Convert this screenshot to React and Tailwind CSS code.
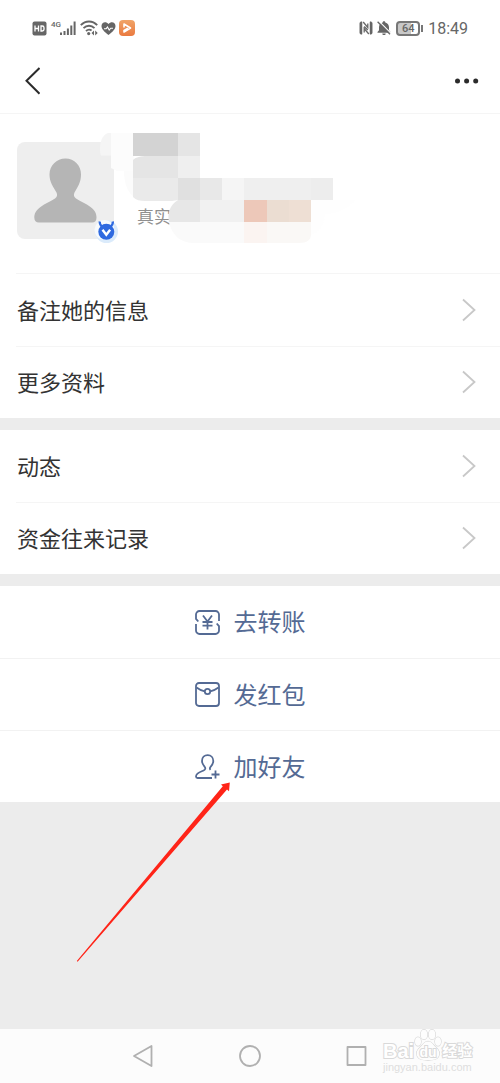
import React from 'react';

const INFO_ROWS = [
  ['备注她的信息', '更多资料'],
  ['动态', '资金往来记录'],
];

// Pixelated patches over the private name: [x, y, width, height, color]
const MOSAIC = [
  [133, 133, 45, 23, '#d3d3d3'],
  [178, 133, 22, 23, '#e5e5e5'],
  [178, 156, 22, 22, '#efefef'],
  [178, 178, 22, 22, '#e0e0e0'],
  [200, 178, 22, 22, '#e8e8e8'],
  [222, 178, 22, 22, '#f5f5f5'],
  [244, 178, 67, 22, '#efefef'],
  [311, 178, 22, 22, '#ededed'],
  [200, 200, 44, 22, '#f1f1f1'],
  [244, 200, 23, 22, '#edc8b9'],
  [267, 200, 22, 22, '#ebddd2'],
  [289, 200, 22, 22, '#eedfd4'],
];

function StatusBar() {
  return (
    <div className="flex h-12 items-center justify-between px-8 pt-2 text-[#666]">
      <div className="flex items-center">
        <svg className="h-[15px] w-[15px]" viewBox="0 0 15 15" fill="none">
          <rect x="0.5" y="0.5" width="14" height="14" rx="2" fill="#666" />
          <path d="M3 4.5v6M6.5 4.5v6M3 7.5h3.5M9 5v5h1.2a1.8 1.8 0 0 0 1.8-1.8V6.8A1.8 1.8 0 0 0 10.2 5z" stroke="#fff" strokeWidth="1.3" />
        </svg>
        <span className="ml-1 h-4 font-[Roboto] text-[8px] leading-[9px] font-medium">4G</span>
        <svg className="-ml-px h-4 w-4" viewBox="0 0 16 16" stroke="currentColor" strokeWidth="2">
          <path d="M1 12.5v2.5M4.5 11v4M7.9 8.5v6.5M11.3 5.5v9.5M14.6 1.5v13.5" />
        </svg>
        <svg className="ml-1 h-4 w-[18px]" viewBox="0 0 18 16" fill="none" stroke="currentColor" strokeWidth="1.900">
          <path d="M0.8 5.2C5.5 0.3 12.500 0.3 17.200 5.2M3.500 8.200c3.200-3.200 7.800-3.200 11 0M6 11c2-1.800 3.800-1.800 5.600-0.400" />
          <circle cx="8.700" cy="13.600" r="1.600" fill="currentColor" stroke="none" />
          <path d="M14 10.500v5l-2.500-2.500zM15.200 10.500v5l2.500-2.500z" fill="currentColor" stroke="none" />
        </svg>
        <svg className="ml-[3px] h-[15px] w-[15px]" viewBox="0 0 15 14" fill="none">
          <path d="M7.500 13.500C3 10 0.500 7.500 0.500 4.500 0.500 0.500 5 -0.500 7.500 2.500 10 -0.500 14.500 0.500 14.500 4.500c0 3-2.500 5.500-7 9z" fill="#666" />
          <path d="M3 7.200h2.200l1.300-1.700 1.700 3L9.700 6.700H12" stroke="#fff" strokeWidth="1.100" />
        </svg>
        <svg className="ml-[3px] h-4 w-4" viewBox="0 0 16 16" fill="none">
          <defs>
            <linearGradient id="playerTile" x1="0" y1="0" x2="0" y2="1">
              <stop offset="0" stopColor="#f0a468" />
              <stop offset="1" stopColor="#ea7a40" />
            </linearGradient>
          </defs>
          <rect width="16" height="16" rx="4" fill="url(#playerTile)" />
          <path d="M5 7V4L11.500 8 5 12v-1.500L8.500 8.500" stroke="#fff" strokeWidth="1.600" strokeLinejoin="round" strokeLinecap="round" />
        </svg>
      </div>

      <div className="flex items-center">
        <svg className="h-[14px] w-[14px]" viewBox="0 0 14 14" fill="none" stroke="currentColor">
          <path d="M3 0.800H2.300A1.500 1.500 0 0 0 0.800 2.300v9.400a1.500 1.500 0 0 0 1.500 1.500H3z" fill="currentColor" strokeWidth="0.500" />
          <path d="M11 0.800h.7a1.500 1.500 0 0 1 1.500 1.500v9.400a1.500 1.500 0 0 1-1.500 1.500H11z" fill="currentColor" strokeWidth="0.500" />
          <path d="M4.200 1L8.800 6.500V2.500M9.800 13L5.200 7.500v4M5.200 5.500l3.600 3.500" strokeWidth="1.300" />
        </svg>
        <svg className="ml-1 h-[14px] w-[14px]" viewBox="0 0 14 14" fill="none">
          <path d="M7 0.300c-.9 0-1.300.5-1.300 1.200C3.300 2.100 2 4 2 6.300v3L0.500 11v.8h13V11L12 9.300v-3c0-2.300-1.300-4.200-3.700-4.800 0-.7-.4-1.200-1.300-1.200zM5.300 12.500h3.400a1.700 1.700 0 0 1-3.400 0z" fill="#666" />
          <path d="M1.800 0L14 12.300" stroke="#fff" strokeWidth="1.100" />
          <path d="M0.600 0.800L13 13.300" stroke="#666" strokeWidth="1.300" />
        </svg>
        <div className="ml-[5px] flex items-center">
          <span className="flex h-[15px] w-6 items-center justify-center rounded-[4px] border-2 border-[#777] bg-[linear-gradient(90deg,#c8c8c8_65%,#fff_65%)] pt-px font-[Roboto] text-[11px] leading-3 font-medium">
            64
          </span>
          <span className="ml-px h-[7px] w-[2px] bg-[#777]" />
        </div>
        <span className="ml-[5px] pt-0.5 font-[Roboto] text-base leading-4">18:49</span>
      </div>
    </div>
  );
}

function Header() {
  return (
    <header className="flex h-[66px] items-center justify-between border-b border-[#f5f5f5] px-5">
      <button type="button" aria-label="返回" className="px-1">
        <svg className="h-7 w-4" viewBox="0 0 16 28" fill="none" stroke="#2b2b2b" strokeWidth="2">
          <path d="M15.500 1L2.500 13.700l13 13" />
        </svg>
      </button>
      <button type="button" aria-label="更多">
        <svg className="h-6 w-[26px]" viewBox="0 0 26 24" fill="#2b2b2b">
          <circle cx="3.500" cy="12" r="2.500" />
          <circle cx="12.600" cy="12" r="2.500" />
          <circle cx="21.700" cy="12" r="2.500" />
        </svg>
      </button>
    </header>
  );
}

function Profile() {
  return (
    <section className="relative flex h-40 items-start pt-7 pl-[17px]">
      <div className="relative h-[97px] w-[97px] rounded-lg bg-[#eee]">
        <svg className="h-full w-full" viewBox="0 0 97 97" fill="#b5b5b5">
          <path d="M48.500 16.500c9 0 15.500 7 15.500 16 0 8-3.500 12.500-6.500 18-1.200 2.500-.5 4.500 1.500 6 4 2.800 10 5 14.500 8.500 4.500 3.300 6 6.500 6 10.500 0 3.500-1.500 5-4.500 5H22c-3 0-4.700-1.500-4.700-5 0-4 1.700-7.200 6.200-10.500C28 61.500 34 59.300 38 56.500c2-1.500 2.700-3.500 1.500-6-3-5.500-7-10-7-18 0-9 7-16 16-16z" />
        </svg>
      </div>
      <span className="mt-[62px] ml-[23px] text-[17px] leading-6 text-[#8f8f8f]">真实</span>

      <svg className="absolute top-0 left-0 h-40 w-[400px]" viewBox="0 114 400 160" aria-hidden="true">
        <path d="M112 133h-3c-5 0-9 7-9 15 0 3 0 5 1 7.500h11z" fill="#f5f5f5" />
        <path d="M111 133h23v38h-17l-6-3z" fill="#fcfcfc" />
        <path d="M124 171h12v27c-8-4-12-14-12-27z" fill="#fbfbfb" />
        <path d="M311 200h44c-8 9-18 14-30 14-1 8-4 18-14 21z" fill="#fefefe" />
        {MOSAIC.map(([x, y, width, height, color]) => (
          <rect key={`${x}-${y}`} x={x} y={y} width={width} height={height} fill={color} />
        ))}
        <path d="M133 160c3-3 8-4 14-4h31v22h-45z" fill="#e5e5e5" />
        <path d="M133 178h45v22l-6 1h-27c-5 0-9-1-12-4z" fill="#eaeaea" />
        <path d="M200 200v22h-31c-2-9 1-17 9-22z" fill="#e7e7e7" />
        <path d="M169 222h75v21h-50c-14 0-22-8-25-21z" fill="#fafafa" />
        <path d="M244 222h23v21h-23z" fill="#fbf4f1" />
        <path d="M267 222h44v12c0 6-4 9-12 9h-32z" fill="#faf8f6" />

        {/* verified badge */}
        <circle cx="106.500" cy="231.500" r="11.500" fill="#dbebfb" />
        <circle cx="104.500" cy="230" r="10" fill="#f7fafd" />
        <path d="M99.800 221.500c-.3 2.500 1 4.500 3.500 5.500M112.800 221.500c.3 2.500-1 4.500-3.500 5.500" stroke="#2f6ae0" strokeWidth="2.400" fill="none" />
        <circle cx="106.300" cy="231.800" r="8" fill="#2f6ae0" />
        <path d="M102.500 229.800l3.800 5 3.800-5" stroke="#fff" strokeWidth="2.400" fill="none" />
      </svg>

      <div className="absolute right-0 bottom-0 left-4 border-b border-[#f5f5f5]" />
    </section>
  );
}

function InfoRow({ label, divided }) {
  return (
    <button type="button" className="relative flex h-[72px] w-full items-center justify-between pr-6 pl-[17px] text-left">
      {divided && <span className="absolute top-0 right-0 left-4 border-t border-[#f5f5f5]" />}
      <span className="pb-0.5 text-[22px] leading-8 text-[#333]">{label}</span>
      <svg className="h-6 w-[14px]" viewBox="0 0 14 24" fill="none" stroke="#c8c8c8" strokeWidth="1.800">
        <path d="M1 1.500L12.500 12 1 22.500" />
      </svg>
    </button>
  );
}

function TransferIcon() {
  return (
    <svg className="h-[25px] w-[25px]" viewBox="0 0 25 25" fill="none" stroke="currentColor" strokeWidth="1.800">
      <path d="M3.300 11.500L1 8.800V4.500A3.500 3.500 0 0 1 4.500 1h16A3.500 3.500 0 0 1 24 4.500V11" />
      <path d="M21.700 13.500L24 16.200v4.300a3.500 3.500 0 0 1-3.500 3.500h-16A3.500 3.500 0 0 1 1 20.500V14" />
      <path d="M8 5.500l4.500 6 4.500-6M12.500 11.500v8M7.500 12h10M7.500 15.700h10" />
    </svg>
  );
}

function RedPacketIcon() {
  return (
    <svg className="h-[25px] w-[25px]" viewBox="0 0 25 25" fill="none" stroke="currentColor" strokeWidth="1.800">
      <rect x="1" y="1" width="23" height="23" rx="3" />
      <path d="M1.500 5.500c3 2.200 5.500 3.300 8.200 3.800M23.500 5.500c-3 2.200-5.500 3.300-8.200 3.800" />
      <circle cx="12.500" cy="9.500" r="2.700" />
    </svg>
  );
}

function AddFriendIcon() {
  return (
    <svg className="h-[25px] w-[25px]" viewBox="0 0 25 25" fill="none" stroke="currentColor" strokeWidth="1.800">
      <path d="M15.500 15.800c-.9-1-.7-2 .1-3 1.700-2 2.700-3.200 2.700-5.700 0-3.500-2.300-6-5.600-6S7 3.500 7 7c0 2.500 1 3.700 2.600 5.700 1.200 1.500.8 3-1 3.800-2.300 1-4.400 1.700-6.100 3.200C1.300 20.800 1 21.700 1 22.500c0 1 .6 1.500 1.600 1.500H17" />
      <path d="M20.500 16.500v8M16.500 20.500h8" />
    </svg>
  );
}

function ActionButton({ icon, label, divided }) {
  return (
    <button
      type="button"
      className={`flex h-[72px] w-full items-center justify-center gap-[14px] text-[#546a94] ${divided ? 'border-t border-[#f2f2f2]' : ''}`}
    >
      {icon}
      <span className="pb-0.5 text-[24px] leading-8">{label}</span>
    </button>
  );
}

function PointerArrow() {
  return (
    <svg
      className="pointer-events-none absolute top-[51px] right-1/2 mr-[19px] h-[182px] w-[155px]"
      viewBox="0 0 155 182"
      fill="#ff2418"
      aria-hidden="true"
    >
      <path d="M0.800 180L146.800 5.200 145 3.500 153.800 1.500 153 10.200 151 8.600 1.600 180.700z" />
    </svg>
  );
}

function Watermark() {
  return (
    <div className="absolute right-[26px] bottom-[10px] flex w-[91px] flex-col font-['Liberation_Sans','Noto_Sans_CJK_SC',sans-serif]">
      <div className="flex items-end text-white [paint-order:stroke_fill] [-webkit-text-stroke:2px_#d9d9d9]">
        <span className="text-[20px] leading-5 font-bold">Bai</span>
        <span className="relative flex h-8 w-7 items-end justify-center">
          <svg className="absolute inset-0 h-full w-full" viewBox="0 0 28 32" fill="#fdfdfd" stroke="#d6d6d6" strokeWidth="1.300">
            <ellipse cx="4" cy="12.500" rx="3" ry="4.300" />
            <ellipse cx="10" cy="5.500" rx="3.300" ry="4.800" />
            <ellipse cx="18" cy="5.500" rx="3.300" ry="4.800" />
            <ellipse cx="24" cy="12.500" rx="3" ry="4.300" />
            <path d="M14 12.500c4 0 5 3.500 8 6 3.500 3 4 6 2.500 9-1.500 3-4.500 3.500-10.500 3.500s-9-.5-10.500-3.500c-1.500-3-1-6 2.500-9 3-2.500 4-6 8-6z" />
          </svg>
          <span className="relative text-[14px] leading-[18px] font-bold">du</span>
        </span>
        <span className="text-[15px] leading-5 font-bold">经验</span>
      </div>
      <span className="text-[11px] leading-3 text-[#dedede]">jingyan.baidu.com</span>
    </div>
  );
}

function NavBar() {
  return (
    <nav className="relative h-[54px] bg-[#fcfcfc] px-[18%] text-[#b0b0b0]">
      <div className="grid h-full grid-cols-3 place-items-center">
        <button type="button" aria-label="Back">
          <svg className="h-6 w-6" viewBox="0 0 24 24" fill="none" stroke="currentColor" strokeWidth="1.800" strokeLinejoin="round">
            <path d="M20.500 2v20L3 12z" />
          </svg>
        </button>
        <button type="button" aria-label="Home">
          <svg className="h-6 w-6" viewBox="0 0 24 24" fill="none" stroke="currentColor" strokeWidth="1.800">
            <circle cx="12" cy="12" r="10" />
          </svg>
        </button>
        <button type="button" aria-label="Recent">
          <svg className="h-6 w-6" viewBox="0 0 24 24" fill="none" stroke="currentColor" strokeWidth="1.800" strokeLinejoin="round">
            <rect x="2.500" y="3" width="18" height="18" />
          </svg>
        </button>
      </div>
      <Watermark />
    </nav>
  );
}

export default function App() {
  return (
    <div className="flex min-h-screen flex-col bg-[#ececec] font-['Noto_Sans_CJK_SC',sans-serif]">
      <div className="bg-white">
        <StatusBar />
        <Header />
        <Profile />
      </div>

      <main className="flex flex-1 flex-col gap-3">
        {INFO_ROWS.map((rows) => (
          <section key={rows[0]} className="bg-white">
            {rows.map((label, i) => (
              <InfoRow key={label} label={label} divided={i > 0} />
            ))}
          </section>
        ))}

        <section className="bg-white">
          <ActionButton icon={<TransferIcon />} label="去转账" />
          <ActionButton icon={<RedPacketIcon />} label="发红包" divided />
          <div className="relative">
            <ActionButton icon={<AddFriendIcon />} label="加好友" divided />
            <PointerArrow />
          </div>
        </section>
      </main>

      <NavBar />
    </div>
  );
}
